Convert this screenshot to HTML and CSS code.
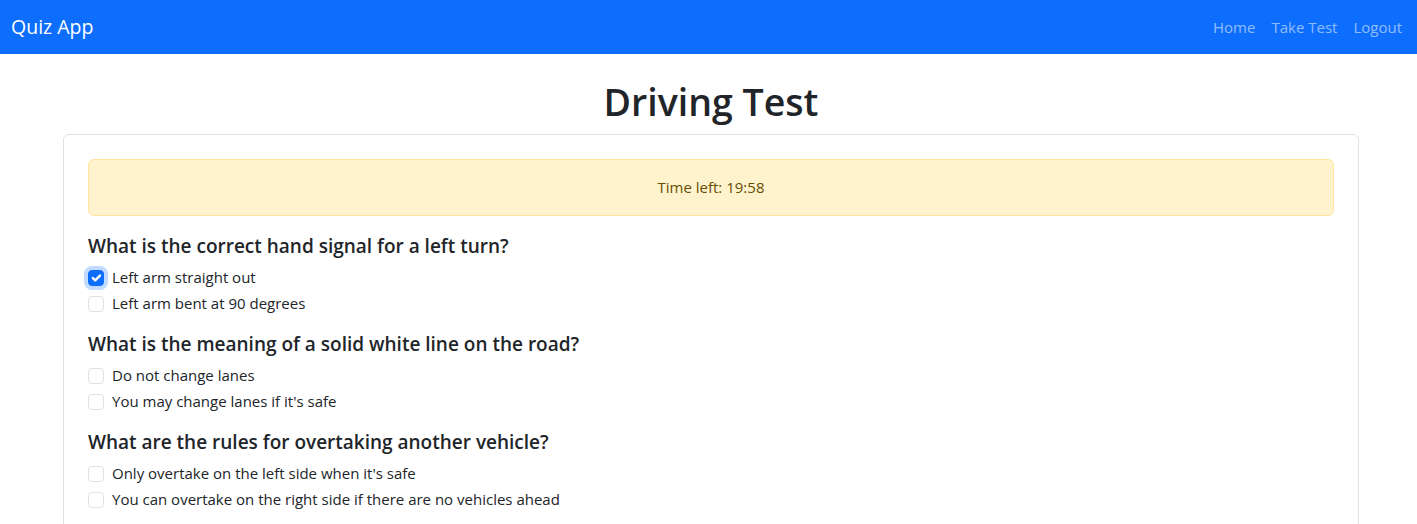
FILE: index.html
```html
<!DOCTYPE html>
<html lang="en">
<head>
<meta charset="utf-8">
<title>Quiz App</title>
<link rel="stylesheet" href="styles.css">
</head>
<body>
<nav class="navbar">
  <a class="brand" href="#">Quiz App</a>
  <div class="nav-links">
    <a class="nav-link" href="#">Home</a>
    <a class="nav-link" href="#">Take Test</a>
    <a class="nav-link" href="#">Logout</a>
  </div>
</nav>
<main class="container">
  <h1 class="title">Driving Test</h1>
  <div class="card">
    <div class="card-body">
      <div class="alert">Time left: 19:58</div>
      <div class="question">
        <h5 class="q-title">What is the correct hand signal for a left turn?</h5>
        <label class="form-check"><span class="box checked"><svg viewBox="0 0 20 20" width="16" height="16"><path fill="none" stroke="#fff" stroke-linecap="round" stroke-linejoin="round" stroke-width="3" d="M6 10l3 3l6-6"/></svg></span>Left arm straight out</label>
        <label class="form-check"><span class="box"></span>Left arm bent at 90 degrees</label>
      </div>
      <div class="question">
        <h5 class="q-title">What is the meaning of a solid white line on the road?</h5>
        <label class="form-check"><span class="box"></span>Do not change lanes</label>
        <label class="form-check"><span class="box"></span>You may change lanes if it's safe</label>
      </div>
      <div class="question">
        <h5 class="q-title">What are the rules for overtaking another vehicle?</h5>
        <label class="form-check"><span class="box"></span>Only overtake on the left side when it's safe</label>
        <label class="form-check"><span class="box"></span>You can overtake on the right side if there are no vehicles ahead</label>
      </div>
    </div>
  </div>
</main>
</body>
</html>
```

FILE: styles.css
```css
* { box-sizing: border-box; }
body {
  margin: 0;
  font-family: "Open Sans", "Noto Sans", sans-serif;
  font-size: 16px;
  line-height: 1.5;
  color: #212529;
  background: #fff;
}
.navbar {
  height: 54px;
  background: #0d6efd;
  display: flex;
  align-items: center;
  justify-content: space-between;
  padding: 0 7px 0 11px;
}
.brand {
  color: #fff;
  font-size: 19.5px;
  text-decoration: none;
}
.nav-links { display: flex; }
.nav-link {
  color: rgba(255,255,255,0.55);
  font-size: 15px;
  text-decoration: none;
  padding: 0 8px;
}
.container {
  margin: 0 58px 0 63px;
  padding-top: 24px;
}
.title {
  margin: 0 0 8px;
  text-align: center;
  font-size: 37.5px;
  line-height: 48px;
  font-weight: 600;
}
.card {
  border: 1px solid #dee2e6;
  border-radius: 6px;
}
.card-body { padding: 24px; }
.alert {
  background: #fff3cd;
  border: 1px solid #ffe69c;
  color: #664d03;
  border-radius: 6px;
  padding: 16px;
  text-align: center;
  margin-bottom: 18px;
  font-size: 15px;
  line-height: 23px;
}
.question { margin-bottom: 16px; }
.q-title {
  margin: 0 0 8px;
  font-size: 19px;
  line-height: 24px;
  font-weight: 600;
}
.form-check {
  display: flex;
  align-items: flex-start;
  min-height: 24px;
  margin-bottom: 2px;
  font-size: 15px;
}
.box {
  width: 16px;
  height: 16px;
  margin: 4px 8px 0 0;
  border: 1px solid #dee2e6;
  border-radius: 4px;
  flex-shrink: 0;
  display: flex;
}
.box.checked {
  background: #0d6efd;
  border-color: #0d6efd;
  box-shadow: 0 0 0 4px rgba(13,110,253,0.25);
}
.box svg { margin: -1px; }
```
